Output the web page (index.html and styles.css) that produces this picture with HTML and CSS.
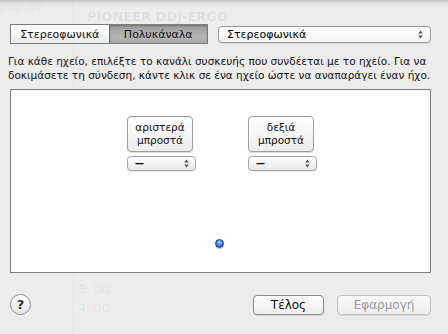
FILE: index.html
```html
<!DOCTYPE html>
<html lang="el">
<head>
  <meta charset="UTF-8">
  <meta name="viewport" content="width=device-width, initial-scale=1.0">
  <title>Ρύθμιση ηχείων</title>
  <link rel="stylesheet" href="styles.css">
</head>
<body>

<div class="sheet">
  <!-- Παράθυρο από πίσω (διαφαίνεται) -->
  <div class="ghost">
    <div class="ghost-side">ρόφωνο</div>
    <div class="ghost-title">PIONEER DDJ-ERGO</div>
    <div class="ghost-row r3">3: DD...</div>
    <div class="ghost-row r4">4: DD...</div>
  </div>

  <!-- Επιλογή διαμόρφωσης -->
  <div class="top-row">
    <div class="segmented">
      <button class="seg">Στερεοφωνικά</button>
      <button class="seg active">Πολυκάναλα</button>
    </div>
    <div class="popup wide">
      <span>Στερεοφωνικά</span>
      <svg class="arrows" width="5" height="9" viewBox="0 0 5 9"><path d="M2.5 0.5 L4.8 3.5 H0.2 Z M2.5 8.5 L4.8 5.5 H0.2 Z" fill="#555"/></svg>
    </div>
  </div>

  <p class="hint">Για κάθε ηχείο, επιλέξτε το κανάλι συσκευής που συνδέεται με το ηχείο. Για να δοκιμάσετε τη σύνδεση, κάντε κλικ σε ένα ηχείο ώστε να αναπαράγει έναν ήχο.</p>

  <!-- Ηχεία -->
  <div class="speakers">
    <div class="speaker-row">
      <div class="speaker">
        <button class="spk-btn">αριστερά<br>μπροστά</button>
        <div class="popup small">
          <span class="dash">—</span>
          <svg class="arrows" width="5" height="9" viewBox="0 0 5 9"><path d="M2.5 0.5 L4.8 3.5 H0.2 Z M2.5 8.5 L4.8 5.5 H0.2 Z" fill="#555"/></svg>
        </div>
      </div>
      <div class="speaker">
        <button class="spk-btn">δεξιά<br>μπροστά</button>
        <div class="popup small">
          <span class="dash">—</span>
          <svg class="arrows" width="5" height="9" viewBox="0 0 5 9"><path d="M2.5 0.5 L4.8 3.5 H0.2 Z M2.5 8.5 L4.8 5.5 H0.2 Z" fill="#555"/></svg>
        </div>
      </div>
    </div>
    <div class="listener"></div>
  </div>

  <!-- Κουμπιά -->
  <div class="footer">
    <button class="help">?</button>
    <div class="spacer"></div>
    <button class="push">Τέλος</button>
    <button class="push disabled">Εφαρμογή</button>
  </div>
</div>

</body>
</html>
```

FILE: styles.css
```css
/* Γενικά */
body {
  margin: 0;
  font-family: "DejaVu Sans", "Liberation Sans", sans-serif;
  font-size: 11px;
  color: #000;
  background: #ececec;
}
.sheet {
  position: relative;
  width: 448px;
  height: 334px;
  box-sizing: border-box;
  padding: 24px 17px 0 10px;
  background: linear-gradient(#c4c4c4 0, #e4e4e4 4px, #ececec 8px);
  overflow: hidden;
}
button {
  font-family: inherit;
  margin: 0;
}

/* Παράθυρο από πίσω */
.ghost {
  position: absolute;
  inset: 0;
  color: rgba(0,0,0,0.06);
  pointer-events: none;
}
.ghost::before {
  content: "";
  position: absolute;
  left: 73px;
  top: 0;
  bottom: 0;
  border-left: 1px solid rgba(0,0,0,0.035);
}
.ghost-side {
  position: absolute;
  left: 0;
  top: 0;
  font-size: 11px;
}
.ghost-title {
  position: absolute;
  left: 87px;
  top: 9px;
  font-size: 13px;
  line-height: 15px;
  font-weight: bold;
}
.ghost-row {
  position: absolute;
  left: 79px;
  font-size: 11px;
}
.ghost-row.r3 { top: 283px; }
.ghost-row.r4 { top: 302px; }

/* Πάνω σειρά */
.top-row {
  position: relative;
  display: flex;
  align-items: center;
  gap: 10px;
}
.segmented {
  display: flex;
  width: 198px;
  height: 20px;
  border: 1px solid #7c7c7c;
  box-sizing: border-box;
}
.seg {
  flex: 1;
  border: none;
  padding: 0;
  font-size: 11px;
  color: #111;
  background: linear-gradient(#ffffff, #ececec);
}
.seg.active {
  border-left: 1px solid #6e6e6e;
  background: linear-gradient(#9a9a9a, #b4b4b4 60%, #aaaaaa);
  box-shadow: inset 0 1px 2px rgba(0,0,0,0.25);
}
.popup {
  display: flex;
  align-items: center;
  justify-content: space-between;
  box-sizing: border-box;
  border: 1px solid #9a9a9a;
  border-radius: 4px;
  background: linear-gradient(#ffffff, #f2f2f2);
  box-shadow: 0 1px 0 rgba(0,0,0,0.08);
  font-size: 11px;
}
.popup.wide {
  width: 213px;
  height: 17px;
  padding: 0 7px 0 8px;
}
.arrows {
  display: block;
}

/* Οδηγία */
.hint {
  position: relative;
  margin: 10px 0 0 -2px;
  line-height: 14px;
  font-size: 10.5px;
  color: #111;
}

/* Πλαίσιο ηχείων */
.speakers {
  position: relative;
  margin-top: 7px;
  height: 184px;
  box-sizing: border-box;
  border: 1px solid #7d7d7d;
  background: #fff;
  padding: 26px 0 0 116px;
}
.speaker-row {
  display: flex;
  gap: 52px;
}
.speaker {
  display: flex;
  flex-direction: column;
  gap: 4px;
}
.spk-btn {
  width: 66px;
  height: 36px;
  padding: 0;
  font-size: 10.5px;
  line-height: 13px;
  color: #111;
  border: 1px solid #9c9c9c;
  border-radius: 4px;
  background: linear-gradient(#ffffff, #ececec);
  box-shadow: 0 1px 1px rgba(0,0,0,0.15);
}
.popup.small {
  width: 69px;
  height: 15px;
  padding: 0 6px 0 7px;
  border-color: #a5a5a5;
  background: linear-gradient(#ffffff, #e8e8e8);
}
.popup.small .dash {
  font-size: 9px;
  font-weight: bold;
  line-height: 13px;
}
.listener {
  position: absolute;
  left: 204px;
  top: 149px;
  width: 9px;
  height: 9px;
  box-sizing: border-box;
  border: 1px solid #1d3f86;
  border-radius: 50%;
  background: radial-gradient(circle at 50% 35%, #b5d3ff 0, #4a86e8 45%, #1f4fa8 100%);
  box-shadow: 0 1px 1px rgba(0,0,0,0.3);
}

/* Κάτω κουμπιά */
.footer {
  position: relative;
  display: flex;
  align-items: center;
  gap: 13px;
  margin-top: 21px;
}
.help {
  width: 21px;
  height: 21px;
  padding: 0;
  border-radius: 50%;
  border: 1px solid #8e8e8e;
  background: linear-gradient(#ffffff, #e6e6e6);
  font-size: 13px;
  font-weight: bold;
  color: #333;
  line-height: 19px;
}
.spacer {
  flex: 1;
}
.push {
  height: 20px;
  padding: 0;
  font-size: 12px;
  color: #111;
  border: 1px solid #8a8a8a;
  border-radius: 4px;
  background: linear-gradient(#ffffff, #ededed);
  box-shadow: 0 1px 0 rgba(0,0,0,0.08);
  width: 71px;
}
.push.disabled {
  width: 94px;
  color: #9a9a9a;
  border-color: #c0c0c0;
  background: linear-gradient(#f8f8f8, #eeeeee);
}
```
